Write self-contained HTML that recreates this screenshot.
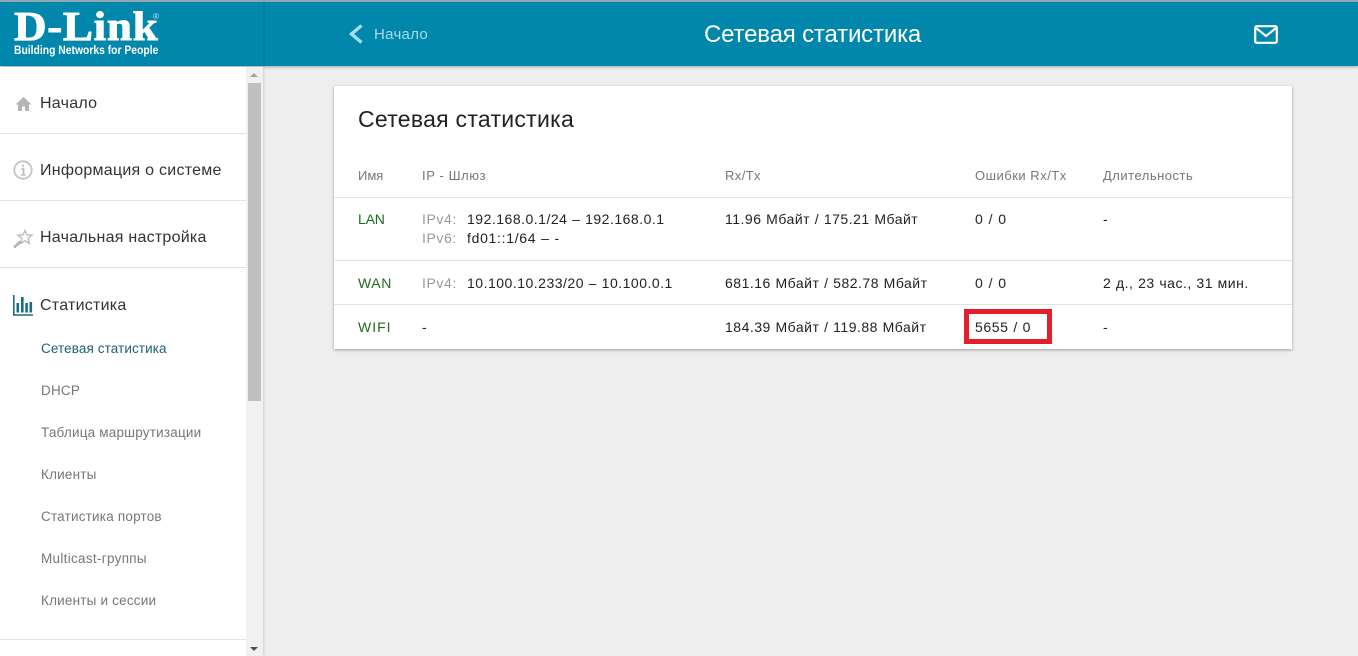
<!DOCTYPE html>
<html lang="ru"><head><meta charset="utf-8"><title>Сетевая статистика</title>
<style>
html,body{margin:0;padding:0;width:1358px;height:656px;overflow:hidden;background:#eeeeee;font-family:"Liberation Sans",sans-serif}
.a{position:absolute;white-space:nowrap;line-height:20px}
#hd{position:absolute;left:0;top:2px;width:1358px;height:64px;background:#0087ab;box-shadow:0 1px 3px rgba(0,0,0,.3)}
#top{position:absolute;left:0;top:0;width:1358px;height:2px;background:#8fa9b3}
#sb{position:absolute;left:0;top:67px;width:263px;height:589px;background:#fff;box-shadow:1px 0 2px rgba(0,0,0,.12)}
.hr{position:absolute;left:0;width:246px;height:1px;background:#e3e3e3}
.m{font-size:16px;color:#333;left:40px;letter-spacing:.25px}
.s{font-size:13.5px;color:#777;left:41px;letter-spacing:.2px}
.rl{position:absolute;left:334px;width:958px;height:1px;background:#e4e4e4}
.t{font-size:14px;color:#222;letter-spacing:.5px;word-spacing:.3px}
.g{font-size:14px;color:#999;letter-spacing:.6px}
.h{font-size:13px;color:#777;letter-spacing:.5px}
.n{font-size:14px;color:#1f6b1f}
</style></head><body>
<div id="hd"></div><div id="top"></div>
<div style="position:absolute;left:263px;top:2px;width:2px;height:64px;background:#007c9d"></div>

<div class="a" style="left:14px;top:4px;font:bold 41px/44px 'Liberation Serif',serif;color:#fff;letter-spacing:.6px;-webkit-text-stroke:.9px #fff;transform:scaleX(1.1);transform-origin:0 0">D-Link</div>
<div class="a" style="left:153px;top:12px;font-size:8px;line-height:9px;color:#cfe6ee">®</div>
<div class="a" style="left:14px;top:44px;font-size:11.5px;line-height:14px;font-weight:bold;color:#fff;transform:scaleX(.9);transform-origin:0 0">Building Networks for People</div>

<svg style="position:absolute;left:348px;top:24px" width="16" height="22" viewBox="0 0 16 22"><path d="M13.500 1.500 3.500 10l10 8.500" fill="none" stroke="#a5dcec" stroke-width="3.400"/></svg>
<div class="a" style="left:374px;top:25px;font-size:15px;color:#a5dcec;letter-spacing:.3px">Начало</div>
<div class="a" style="left:704px;top:22px;font-size:24px;line-height:26px;color:#fff;letter-spacing:-.17px">Сетевая статистика</div>
<svg style="position:absolute;left:1254px;top:25px" width="24" height="20" viewBox="0 0 24 20"><rect x="1.200" y="1.200" width="21.600" height="16.600" rx="1.500" fill="none" stroke="#fff" stroke-width="2.200"/><path d="M2 3l10 8 10-8" fill="none" stroke="#fff" stroke-width="2.200"/></svg>

<div id="sb"></div>
<div class="hr" style="top:133px"></div><div class="hr" style="top:200px"></div><div class="hr" style="top:267px"></div><div class="hr" style="top:639px"></div>

<svg style="position:absolute;left:15px;top:97px" width="17" height="15" viewBox="0 0 17 15"><path d="M8.500 0 0.500 7.500H3V14h4V9.500h3V14h4V7.500h2.500z" fill="#b4b4b4"/></svg>
<svg style="position:absolute;left:13px;top:160px" width="20" height="20" viewBox="0 0 20 20"><circle cx="10" cy="10" r="8.700" fill="none" stroke="#c4c4c4" stroke-width="1.800"/><path d="M10 4.800v2.200M8.500 9h2v5.500M8 14.800h4.500" fill="none" stroke="#bdbdbd" stroke-width="1.700"/></svg>
<svg style="position:absolute;left:12px;top:227px" width="22" height="22" viewBox="0 0 22 22"><path d="M13 3.500l1.900 4.300 5 .4-3.800 3.300 1.200 4.900-4.300-2.600-4.300 2.600 1.200-4.900L6.100 8.200l5-.4z" fill="none" stroke="#c0c0c0" stroke-width="1.500"/><path d="M8.500 14.500 2 20.500" stroke="#b4b4b4" stroke-width="2.600" fill="none"/></svg>
<svg style="position:absolute;left:13px;top:295px" width="20" height="21" viewBox="0 0 20 21"><path d="M.8 0v20h19.200" fill="none" stroke="#1d6b80" stroke-width="1.600"/><path d="M3.500 8h2.600v9.500H3.500zM8 2h2.600v15.500H8zM12.300 8h2.600v9.500h-2.600zM16.500 7h2.600v10.500h-2.600z" fill="#1d6b80"/></svg>

<div class="a m" style="top:94px">Начало</div>
<div class="a m" style="top:161px">Информация о системе</div>
<div class="a m" style="top:228px">Начальная настройка</div>
<div class="a m" style="top:296px">Статистика</div>
<div class="a s" style="top:339px;color:#1d6274;letter-spacing:.1px">Сетевая статистика</div>
<div class="a s" style="top:381px">DHCP</div>
<div class="a s" style="top:423px">Таблица маршрутизации</div>
<div class="a s" style="top:465px">Клиенты</div>
<div class="a s" style="top:507px">Статистика портов</div>
<div class="a s" style="top:549px;letter-spacing:.3px">Multicast-группы</div>
<div class="a s" style="top:591px">Клиенты и сессии</div>

<div style="position:absolute;left:246px;top:67px;width:17px;height:589px;background:#f1f1f1"></div>
<div style="position:absolute;left:248px;top:83px;width:13px;height:318px;background:#c0c0c0"></div>
<div style="position:absolute;left:250px;top:73px;border:4px solid transparent;border-top:0;border-bottom:4px solid #a3a3a3"></div>
<div style="position:absolute;left:250px;top:647px;border:4px solid transparent;border-bottom:0;border-top:4px solid #505050"></div>

<div style="position:absolute;left:334px;top:86px;width:958px;height:263px;background:#fff;box-shadow:0 1px 3px rgba(0,0,0,.35)"></div>
<div class="a" style="left:358px;top:105px;font-size:23px;line-height:28px;color:#222;letter-spacing:.28px">Сетевая статистика</div>

<div class="a h" style="left:358px;top:166px;letter-spacing:0">Имя</div>
<div class="a h" style="left:422px;top:166px;letter-spacing:.6px">IP - Шлюз</div>
<div class="a h" style="left:725px;top:166px;letter-spacing:.4px">Rx/Tx</div>
<div class="a h" style="left:975px;top:166px">Ошибки Rx/Tx</div>
<div class="a h" style="left:1103px;top:166px">Длительность</div>

<div class="rl" style="top:197px"></div><div class="rl" style="top:260px"></div><div class="rl" style="top:304px"></div>

<div class="a n" style="left:358px;top:209px;letter-spacing:-.2px">LAN</div>
<div class="a g" style="left:422px;top:209px">IPv4:</div>
<div class="a t" style="left:467px;top:209px">192.168.0.1/24 – 192.168.0.1</div>
<div class="a g" style="left:422px;top:228px">IPv6:</div>
<div class="a t" style="left:467px;top:228px;letter-spacing:.7px">fd01::1/64 – -</div>
<div class="a t" style="left:725px;top:209px">11.96 Мбайт / 175.21 Мбайт</div>
<div class="a t" style="left:975px;top:209px;letter-spacing:.8px">0 / 0</div>
<div class="a t" style="left:1103px;top:209px">-</div>

<div class="a n" style="left:358px;top:273px;letter-spacing:.6px">WAN</div>
<div class="a g" style="left:422px;top:273px">IPv4:</div>
<div class="a t" style="left:467px;top:273px">10.100.10.233/20 – 10.100.0.1</div>
<div class="a t" style="left:725px;top:273px">681.16 Мбайт / 582.78 Мбайт</div>
<div class="a t" style="left:975px;top:273px;letter-spacing:.8px">0 / 0</div>
<div class="a t" style="left:1103px;top:273px">2 д., 23 час., 31 мин.</div>

<div class="a n" style="left:358px;top:317px;letter-spacing:1px">WIFI</div>
<div class="a t" style="left:422px;top:317px">-</div>
<div class="a t" style="left:725px;top:317px">184.39 Мбайт / 119.88 Мбайт</div>
<div class="a t" style="left:975px;top:317px;letter-spacing:.6px">5655 / 0</div>
<div class="a t" style="left:1103px;top:317px">-</div>
<div style="position:absolute;left:964px;top:309px;width:78px;height:25px;border:5px solid #e2202c"></div>
</body></html>
